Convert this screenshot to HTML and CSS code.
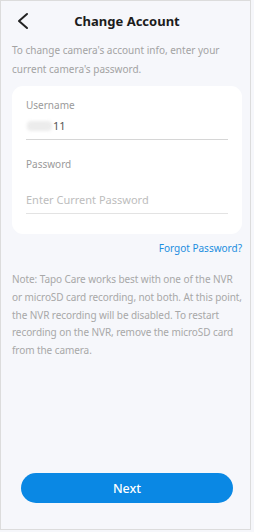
FILE: index.html
```html
<!doctype html>
<html lang="en">
<head>
    <meta charset="UTF-8">
    <title>Change Account</title>
    <link rel="stylesheet" href="styles.css">
</head>
<body>
<div class="screen">
    <div class="header">
        <svg class="back" width="16" height="20" viewBox="0 0 16 20">
            <path d="M11 3 L3 10 L11 17" fill="none" stroke="#222" stroke-width="2" stroke-linecap="round" stroke-linejoin="round"/>
        </svg>
        <div class="title">Change Account</div>
    </div>
    <p class="desc">To change camera's account info, enter your current camera's password.</p>
    <div class="card">
        <div class="label">Username</div>
        <div class="field field-user"><span class="blur"></span>11</div>
        <div class="label label-pwd">Password</div>
        <div class="field field-pwd">Enter Current Password</div>
    </div>
    <div class="forgot">Forgot Password?</div>
    <p class="note">Note: Tapo Care works best with one of the NVR or microSD card recording, not both. At this point, the NVR recording will be disabled. To restart recording on the NVR, remove the microSD card from the camera.</p>
    <div class="next">Next</div>
</div>
</body>
</html>
```

FILE: styles.css
```css
html,body{
    margin:0;
    padding:0;
    background:#fff;
}
.screen{
    position:relative;
    width:254px;
    height:532px;
    box-sizing:border-box;
    padding:0 12px;
    background:#f6f7fb;
    display:flex;
    flex-direction:column;
    font-family:"Noto Sans",sans-serif;
}
.screen::after{
    content:"";
    position:absolute;
    top:0;
    left:0;
    width:251px;
    height:530px;
    box-sizing:border-box;
    border:1px solid #dcdcdc;
    pointer-events:none;
}
.header{
    height:41px;
    display:grid;
    grid-template-columns:30px 1fr 30px;
    align-items:center;
}
.back{
    margin-left:4px;
}
.title{
    text-align:center;
    font-size:13px;
    font-weight:bold;
    color:#1c1c1c;
}
.desc{
    margin:0;
    font-size:10px;
    line-height:19px;
    color:#a3a3a3;
}
.card{
    margin-top:7px;
    background:#fff;
    border-radius:11px;
    padding:12px 14px 20px;
}
.label{
    font-size:10px;
    line-height:14px;
    color:#9a9a9a;
}
.label-pwd{
    margin-top:17px;
}
.field{
    font-size:11px;
    line-height:14px;
    border-bottom:1px solid #e3e3e3;
}
.field-user{
    padding:7px 0 6px;
    color:#555;
    display:flex;
    align-items:center;
    border-bottom-color:#d6d6d6;
}
.blur{
    display:inline-block;
    width:25px;
    height:10px;
    margin:0 1px 0 1px;
    border-radius:4px;
    background:#ececec;
    filter:blur(1.5px);
}
.field-pwd{
    padding:22px 0 6px;
    color:#bdbdbd;
}
.forgot{
    margin-top:7px;
    text-align:right;
    font-size:10px;
    line-height:14px;
    color:#1d8ee0;
}
.note{
    margin:16px 0 0;
    font-size:10px;
    line-height:17.8px;
    letter-spacing:-0.08px;
    color:#a8a8a8;
}
.next{
    margin:auto 9px 29px;
    height:30px;
    border-radius:15px;
    background:#0a88e4;
    color:#fff;
    font-size:12.5px;
    font-weight:500;
    display:flex;
    align-items:center;
    justify-content:center;
}
```
